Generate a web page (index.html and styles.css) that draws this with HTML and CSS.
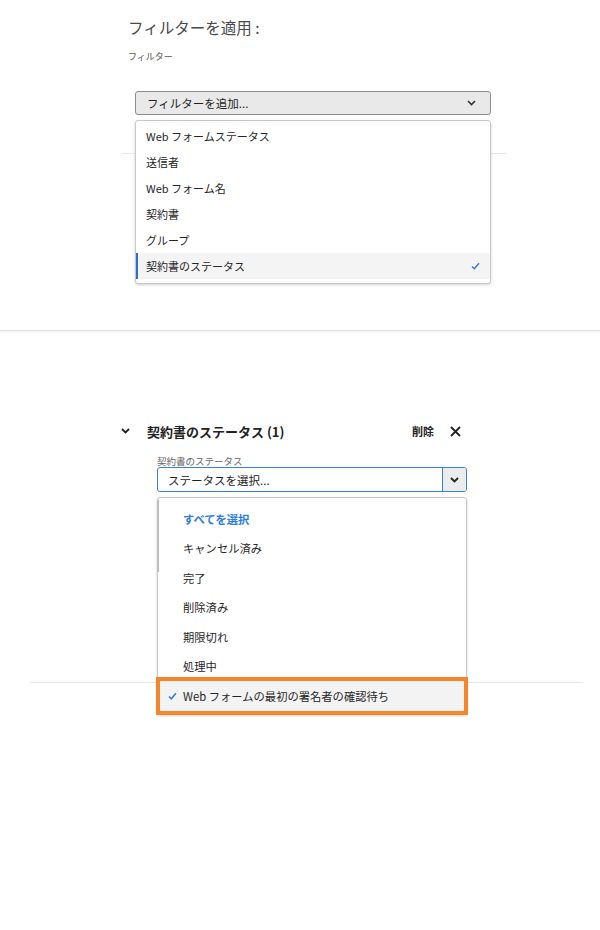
FILE: index.html
```html
<!DOCTYPE html>
<html lang="ja">
<head>
<meta charset="utf-8">
<title>フィルターを適用</title>
<link rel="stylesheet" href="styles.css">
</head>
<body>
<div class="panel1">
  <h1 class="title">フィルターを適用 :</h1>
  <div class="small-label">フィルター</div>
  <div class="dd-wrap">
    <div class="dd-btn">
      <span>フィルターを追加...</span>
      <svg class="chev" width="9" height="6" viewBox="0 0 9 6"><path d="M1 1l3.5 3.5L8 1" fill="none" stroke="#333" stroke-width="1.6"/></svg>
    </div>
    <ul class="menu menu1">
      <li class="item">Web フォームステータス</li>
      <li class="item">送信者</li>
      <li class="item">Web フォーム名</li>
      <li class="item">契約書</li>
      <li class="item">グループ</li>
      <li class="item item-sel">契約書のステータス
        <svg class="check" width="9" height="8" viewBox="0 0 9 8"><path d="M1 4.5l2.3 2.3L8 1.2" fill="none" stroke="#3a78d0" stroke-width="1.4"/></svg>
      </li>
    </ul>
  </div>
  <div class="rule rule1"></div>
</div>
<div class="rule rule-full"></div>

<div class="group">
  <div class="group-head">
    <svg class="gchev" width="9" height="6" viewBox="0 0 9 6"><path d="M1 1l3.5 3.5L8 1" fill="none" stroke="#222" stroke-width="1.8"/></svg>
    <span class="group-title">契約書のステータス (1)</span>
    <span class="remove">削除</span>
    <svg class="close" width="11" height="11" viewBox="0 0 11 11"><path d="M1 1l9 9M10 1l-9 9" fill="none" stroke="#222" stroke-width="1.8"/></svg>
  </div>
  <div class="field">
    <div class="field-label">契約書のステータス</div>
    <div class="select">
      <span class="select-text">ステータスを選択...</span>
      <span class="select-btn">
        <svg width="9" height="6" viewBox="0 0 9 6"><path d="M1 1l3.5 3.5L8 1" fill="none" stroke="#222" stroke-width="1.8"/></svg>
      </span>
    </div>
    <ul class="menu menu2">
      <li class="thumb"></li>
      <li class="opt opt-all">すべてを選択</li>
      <li class="opt">キャンセル済み</li>
      <li class="opt">完了</li>
      <li class="opt">削除済み</li>
      <li class="opt">期限切れ</li>
      <li class="opt">処理中</li>
      <li class="opt opt-sel">
        <svg class="check2" width="9" height="8" viewBox="0 0 9 8"><path d="M1 4.5l2.3 2.3L8 1.2" fill="none" stroke="#2f7be0" stroke-width="1.5"/></svg>
        <span>Web フォームの最初の署名者の確認待ち</span>
      </li>
    </ul>
  </div>
  <div class="rule rule2"></div>
</div>
</body>
</html>
```
FILE: styles.css
```css
* { box-sizing: border-box; }
html, body { background: #fff; }
body {
  margin: 0;
  width: 600px;
  min-height: 930px;
  font-family: "Noto Sans CJK JP", "Noto Sans", sans-serif;
  color: #262626;
}
ul { list-style: none; margin: 0; padding: 0; }

.panel1 {
  margin-left: 122px;
  width: 384px;
  padding-top: 17px;
}
.title {
  margin: 0;
  padding-left: 6px;
  font-size: 15.5px;
  line-height: 20px;
  font-weight: normal;
  color: #4a4a4a;
}
.small-label {
  margin-top: 14px;
  padding-left: 6px;
  font-size: 9px;
  line-height: 12px;
  color: #555;
}
.dd-wrap {
  position: relative;
  margin: 28px 15px 0 13px;
}
.dd-btn {
  height: 24px;
  border: 1px solid #8c8c8c;
  border-radius: 3px;
  background: #e9e9e9;
  display: flex;
  align-items: center;
  justify-content: space-between;
  padding: 0 14px 0 11px;
  font-size: 11.5px;
  color: #1e1e1e;
}
.menu {
  position: absolute;
  left: 0;
  right: 0;
  background: #fff;
  border: 1px solid #c9c9c9;
  border-radius: 3px;
  box-shadow: 0 1px 3px rgba(0,0,0,0.18);
  z-index: 5;
}
.menu1 {
  top: 29px;
  padding: 2px 0 4px;
}
.item {
  height: 26px;
  display: flex;
  align-items: center;
  justify-content: space-between;
  padding: 0 10px 0 10px;
  font-size: 11px;
  color: #262626;
}
.item-sel {
  background: #f4f4f4;
  border-left: 2px solid #2f6fc8;
  padding-left: 8px;
}
.rule { height: 1px; background: #e6e6e6; }
.rule1 { margin-top: 38px; }
.rule-full {
  margin-top: 176px;
  background: #e2e2e2;
  box-shadow: 0 1px 0 #f5f5f5, 0 2px 0 #fafafa;
}

.group { padding-top: 90px; }
.group-head {
  margin-left: 121px;
  width: 340px;
  height: 20px;
  display: flex;
  align-items: center;
}
.gchev { margin-right: 17px; }
.group-title {
  flex: 1;
  font-size: 13px;
  font-weight: bold;
  color: #222;
}
.remove {
  font-size: 11px;
  font-weight: bold;
  color: #222;
  margin-right: 16px;
}
.field {
  position: relative;
  z-index: 3;
  margin: 14px 0 0 157px;
  width: 310px;
}
.field-label {
  font-size: 9.5px;
  line-height: 12px;
  color: #666;
}
.select {
  height: 25px;
  border: 1px solid #3b83d6;
  border-radius: 3px;
  display: flex;
  align-items: stretch;
  overflow: hidden;
}
.select-text {
  flex: 1;
  display: flex;
  align-items: center;
  padding-left: 10px;
  font-size: 11.5px;
  color: #1e1e1e;
}
.select-btn {
  width: 24px;
  background: #ececec;
  border-left: 1px solid #3b83d6;
  display: flex;
  align-items: center;
  justify-content: center;
}
.menu2 {
  top: 42px;
  padding: 6px 0 3px;
}
.thumb {
  position: absolute;
  left: -1px;
  top: 2px;
  width: 2px;
  height: 72px;
  background: #bdbdbd;
}
.opt {
  height: 29.5px;
  display: flex;
  align-items: center;
  padding-left: 25px;
  font-size: 11.3px;
  color: #262626;
  white-space: nowrap;
}
.opt-all {
  color: #2b7be2;
  font-weight: bold;
}
.opt-sel {
  margin: 0 2px;
  padding-left: 8px;
  background: #f3f3f3;
  outline: 4px solid #f6862c;
}
.check2 { margin-right: 6px; flex: none; }
.rule2 {
  position: relative;
  z-index: 1;
  margin: 190px 0 0 30px;
  width: 553px;
  background: #e8e8e8;
}
```
